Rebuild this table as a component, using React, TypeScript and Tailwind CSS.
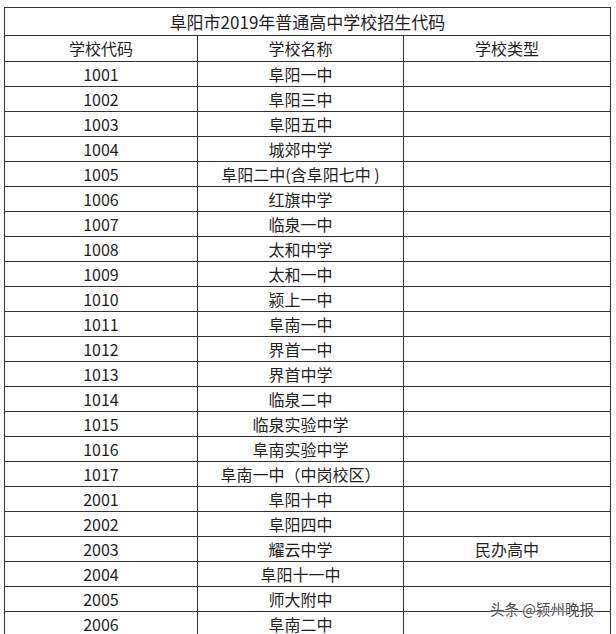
import React from "react";

const rows: [string, string, string][] = [
  ["1001", "阜阳一中", ""],
  ["1002", "阜阳三中", ""],
  ["1003", "阜阳五中", ""],
  ["1004", "城郊中学", ""],
  ["1005", "阜阳二中(含阜阳七中 )", ""],
  ["1006", "红旗中学", ""],
  ["1007", "临泉一中", ""],
  ["1008", "太和中学", ""],
  ["1009", "太和一中", ""],
  ["1010", "颍上一中", ""],
  ["1011", "阜南一中", ""],
  ["1012", "界首一中", ""],
  ["1013", "界首中学", ""],
  ["1014", "临泉二中", ""],
  ["1015", "临泉实验中学", ""],
  ["1016", "阜南实验中学", ""],
  ["1017", "阜南一中（中岗校区）", ""],
  ["2001", "阜阳十中", ""],
  ["2002", "阜阳四中", ""],
  ["2003", "耀云中学", "民办高中"],
  ["2004", "阜阳十一中", ""],
  ["2005", "师大附中", ""],
  ["2006", "阜南二中", ""],
];

const Row = ({ cells, header }: { cells: [string, string, string]; header?: boolean }) => {
  return (
    <div className={`flex border-b border-[#333] ${header ? "h-[26px]" : "h-[25px]"}`}>
      <div className="w-[193px] flex items-center justify-center pb-[1px] border-r border-[#333]">{cells[0]}</div>
      <div className="w-[206px] flex items-center justify-center pb-[1px] border-r border-[#333]">{cells[1]}</div>
      <div className="w-[207px] flex items-center justify-center pb-[1px] border-r border-[#333]">{cells[2]}</div>
    </div>
  );
};

const App = () => {
  return (
    <div className="relative w-[616px] h-[634px] overflow-hidden bg-white text-[#1e1e1e] text-[16px] leading-none font-['Noto_Sans_CJK_SC','Noto_Sans',sans-serif]">
      <div className="pt-[7px] pl-[4px]">
        <div className="w-[607px] border-l border-t border-[#333]">
          <div className="h-[28px] flex items-center justify-center pb-[1px] border-b border-r border-[#333] text-[17px]">
            阜阳市2019年普通高中学校招生代码
          </div>
          <Row cells={["学校代码", "学校名称", "学校类型"]} header />
          {rows.map((r, i) => (
            <Row key={`row-${i}`} cells={r} />
          ))}
        </div>
      </div>
      {/* watermark */}
      <div className="absolute left-[490px] top-[602px] text-[14.5px] leading-none text-[#4a4a4a] [text-shadow:0_0_2px_#fff,0_0_2px_#fff]">
        头条 @颍州晚报
      </div>
    </div>
  );
};

export default App;
